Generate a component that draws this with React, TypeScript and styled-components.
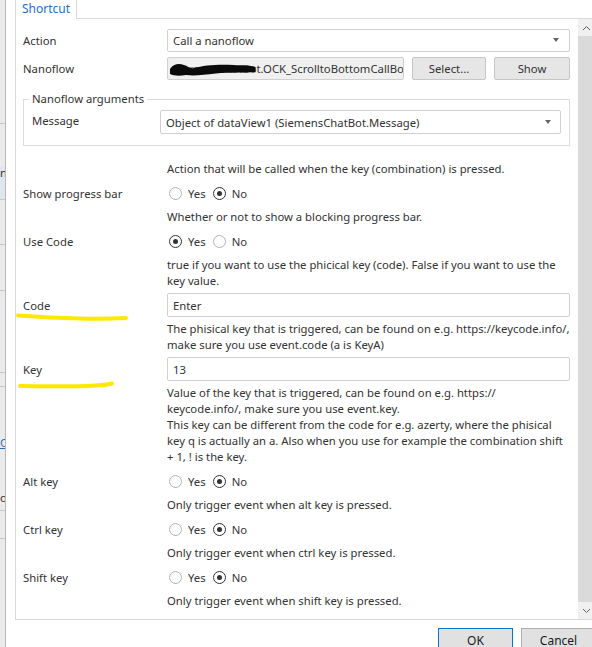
import React from "react";
import styled, { createGlobalStyle } from "styled-components";

const GlobalStyle = createGlobalStyle`
  html, body { margin: 0; padding: 0; background: #ffffff; }
  body {
    font-family: "Noto Sans", "Segoe UI", sans-serif;
    font-size: 11.3px;
    color: #333333;
  }
  * { box-sizing: border-box; }
`;

const Screen = styled.div`
  position: relative;
  width: 592px;
  height: 647px;
  overflow: hidden;
  display: flex;
  background: #ffffff;
`;

/* Sliver of the window that sits behind the dialog */
const Backdrop = styled.div`
  flex: 0 0 6px;
  display: flex;
  flex-direction: column;
  background: #ebebeb;
  border-right: 1px solid #b9b9b9;
  overflow: hidden;
`;

const BackdropPiece = styled.div<{ $h: number; $line?: boolean; $tint?: string }>`
  flex: 0 0 ${(p) => p.$h}px;
  background: ${(p) => p.$tint ?? "transparent"};
  border-bottom: ${(p) => (p.$line ? "1px solid #c8c8c8" : "none")};
  line-height: ${(p) => p.$h}px;
  white-space: nowrap;
  color: #333;
`;

const BackLink = styled.span`
  color: #2a6ebb;
  text-decoration: underline;
`;

const Dialog = styled.div`
  flex: 0 0 599px;
  width: 599px;
  min-width: 0;
  display: flex;
  flex-direction: column;
  padding: 0 9px;
`;

const TabStrip = styled.div`
  flex: 0 0 19px;
  display: flex;
`;

const Tab = styled.div`
  height: 19px;
  padding: 0 6px;
  border-left: 1px solid #d9d9d9;
  border-right: 1px solid #d9d9d9;
  color: #1c6fd6;
  font-size: 12px;
  line-height: 17px;
  background: #ffffff;
`;

const TabRule = styled.div`
  flex: 1;
  border-bottom: 1px solid #d9d9d9;
`;

const Panel = styled.div`
  flex: 0 0 601px;
  min-width: 0;
  display: flex;
  border: 1px solid #d9d9d9;
  border-top: none;
  overflow: hidden;
`;

const Scroller = styled.div`
  flex: 1;
  min-width: 0;
  height: 600px;
  padding: 9px 8px 0 7px;
  overflow: hidden;
`;

const Form = styled.div`
  display: grid;
  grid-template-columns: 144px minmax(0, 1fr);
  align-items: center;
`;

const Label = styled.div<{ $top?: number }>`
  grid-column: 1;
  height: 24px;
  margin-top: ${(p) => p.$top ?? 0}px;
  display: flex;
  align-items: center;
  white-space: nowrap;
`;

const Field = styled.div<{ $top?: number }>`
  grid-column: 2;
  min-height: 24px;
  margin-top: ${(p) => p.$top ?? 0}px;
  display: flex;
  align-items: center;
  gap: 8px;
  min-width: 0;
`;

const Hint = styled.div<{ $top?: number }>`
  grid-column: 2;
  margin: ${(p) => p.$top ?? 4}px 0 4px;
  line-height: 16px;
`;

const HintLine = styled.div`
  white-space: nowrap;
`;

const SelectBox = styled.div<{ $h?: number; $pad?: number }>`
  flex: 1;
  min-width: 0;
  height: ${(p) => p.$h ?? 23}px;
  display: flex;
  align-items: center;
  justify-content: space-between;
  padding: 0 ${(p) => p.$pad ?? 10}px 0 5px;
  border: 1px solid #d0d0d0;
  border-radius: 2px;
  background: #ffffff;
  white-space: nowrap;
  overflow: hidden;
`;

const Caret = styled.span`
  flex: 0 0 auto;
  width: 0;
  height: 0;
  border-left: 3px solid transparent;
  border-right: 3px solid transparent;
  border-top: 4px solid #666666;
`;

const TextBox = styled.div<{ $disabled?: boolean; $width?: number }>`
  flex: ${(p) => (p.$width ? `0 0 ${p.$width}px` : "1")};
  min-width: 0;
  height: ${(p) => (p.$disabled ? 23 : 24)}px;
  display: flex;
  align-items: center;
  padding: 0 5px;
  border: 1px solid #d0d0d0;
  border-radius: 2px;
  background: ${(p) => (p.$disabled ? "#f0f0f0" : "#ffffff")};
  white-space: nowrap;
  overflow: hidden;
  color: #333;
`;

const Redacted = styled.span`
  position: relative;
  color: #7a7a7a;
`;

const Scribble = styled.svg`
  position: absolute;
  left: -3px;
  top: 3px;
  width: calc(100% + 2px);
  height: 12px;
  overflow: visible;
`;

const PlainButton = styled.div<{ $width: number }>`
  flex: 0 0 ${(p) => p.$width}px;
  height: 23px;
  display: flex;
  align-items: center;
  justify-content: center;
  background: #e6e6e6;
  border: 1px solid #c6c6c6;
  border-radius: 2px;
  color: #333;
`;

const GroupBox = styled.fieldset`
  grid-column: 1 / -1;
  margin: 11px 0 0;
  padding: 0 8px 11px;
  min-width: 0;
  border: 1px solid #dcdcdc;
  display: grid;
  grid-template-columns: 128px minmax(0, 1fr);
  align-items: center;
`;

const Legend = styled.legend`
  margin-left: -3px;
  padding: 0 3px;
  line-height: 16px;
`;

const GroupLabel = styled.div`
  height: 24px;
  margin-top: 3px;
  display: flex;
  align-items: center;
  padding-bottom: 3px;
`;

const GroupField = styled.div`
  margin-top: 3px;
  display: flex;
  min-width: 0;
`;

const RadioGroup = styled.div`
  display: flex;
  align-items: center;
  gap: 7px;
  padding-left: 2px;
`;

const RadioOption = styled.span`
  display: flex;
  align-items: center;
  gap: 6px;
`;

const RadioDot = styled.span<{ $checked: boolean }>`
  width: 13px;
  height: 13px;
  border-radius: 50%;
  border: 1px solid ${(p) => (p.$checked ? "#333333" : "#b3b3b3")};
  background: #ffffff;
  display: flex;
  align-items: center;
  justify-content: center;
  &::after {
    content: "";
    display: ${(p) => (p.$checked ? "block" : "none")};
    width: 5px;
    height: 5px;
    border-radius: 50%;
    background: #333333;
  }
`;

const ScrollBar = styled.div`
  flex: 0 0 17px;
  display: flex;
  flex-direction: column;
  background: #f0f0f0;
`;

const ScrollArrow = styled.div`
  flex: 0 0 17px;
  display: flex;
  align-items: center;
  justify-content: center;
`;

const ScrollThumb = styled.div`
  flex: 1;
  background: #dadada;
`;

const Footer = styled.div`
  flex: 1;
  display: flex;
  justify-content: flex-end;
  gap: 8px;
  padding-top: 8px;
`;

const DialogButton = styled.div<{ $primary?: boolean }>`
  flex: 0 0 75px;
  height: 24px;
  display: flex;
  align-items: center;
  justify-content: center;
  background: #e1e1e1;
  border: 1px solid ${(p) => (p.$primary ? "#0078d7" : "#adadad")};
  color: #1a1a1a;
  font-size: 12px;
`;

const Marker = styled.svg`
  position: absolute;
  left: 0;
  top: 0;
  width: 592px;
  height: 647px;
  pointer-events: none;
`;

type Choice = "Yes" | "No";

function YesNo({ value }: { value: Choice }) {
  return (
    <RadioGroup>
      {(["Yes", "No"] as Choice[]).map((c) => (
        <RadioOption key={c}>
          <RadioDot $checked={value === c} />
          {c}
        </RadioOption>
      ))}
    </RadioGroup>
  );
}

function Chevron({ up }: { up?: boolean }) {
  return (
    <svg width="9" height="6" viewBox="0 0 9 6">
      <path
        d={up ? "M1 5 L4.5 1.5 L8 5" : "M1 1 L4.5 4.5 L8 1"}
        fill="none"
        stroke="#606060"
        strokeWidth="1"
      />
    </svg>
  );
}

const backdrop: { h: number; line?: boolean; tint?: string; text?: React.ReactNode }[] = [
  { h: 124, line: true },
  { h: 42 },
  { h: 14, text: "n", tint: "#dfe6ee" },
  { h: 20, tint: "#dfe6ee", line: true },
  { h: 45, line: true },
  { h: 46, line: true },
  { h: 82, line: true },
  { h: 14, line: true },
  { h: 48 },
  { h: 16, text: <BackLink>Cl</BackLink> },
  { h: 40 },
  { h: 14, text: "o" },
  { h: 6, line: true },
  { h: 28, line: true },
  { h: 114, line: true },
];

export default function App() {
  return (
    <>
      <GlobalStyle />
      <Screen>
        <Backdrop>
          {backdrop.map((b, i) => (
            <BackdropPiece key={i} $h={b.h} $line={b.line} $tint={b.tint}>
              {b.text}
            </BackdropPiece>
          ))}
        </Backdrop>

        <Dialog>
          <TabStrip>
            <Tab>Shortcut</Tab>
            <TabRule />
          </TabStrip>

          <Panel>
            <Scroller>
              <Form>
                <Label>Action</Label>
                <Field>
                  <SelectBox>
                    Call a nanoflow
                    <Caret />
                  </SelectBox>
                </Field>

                <Label $top={4}>Nanoflow</Label>
                <Field $top={4}>
                  <TextBox $disabled $width={237}>
                    <Redacted>
                      SiemensChatBo
                      <Scribble viewBox="0 0 86 12" preserveAspectRatio="none">
                        <path
                          d="M0 5 C3 0 9 -1 14 1 C18 2 20 5 24 4 C34 1 50 0 64 1 C72 1.5 80 1 86 3 L86 8 C74 9 60 8 46 9.5 C34 11 24 12 16 11 C10 12 4 12 0 10 Z"
                          fill="#0a0a0a"
                        />
                      </Scribble>
                    </Redacted>
                    t.OCK_ScrolltoBottomCallBot
                  </TextBox>
                  <PlainButton $width={74}>Select...</PlainButton>
                  <PlainButton $width={76}>Show</PlainButton>
                </Field>

                <GroupBox>
                  <Legend>Nanoflow arguments</Legend>
                  <GroupLabel>Message</GroupLabel>
                  <GroupField>
                    <SelectBox $h={24} $pad={9}>
                      Object of dataView1 (SiemensChatBot.Message)
                      <Caret />
                    </SelectBox>
                  </GroupField>
                </GroupBox>

                <Hint $top={15}>
                  <HintLine>Action that will be called when the key (combination) is pressed.</HintLine>
                </Hint>

                <Label>Show progress bar</Label>
                <Field>
                  <YesNo value="No" />
                </Field>
                <Hint>
                  <HintLine>Whether or not to show a blocking progress bar.</HintLine>
                </Hint>

                <Label>Use Code</Label>
                <Field>
                  <YesNo value="Yes" />
                </Field>
                <Hint>
                  <HintLine>
                    true if you want to use the phicical key (code). False if you want to use the
                  </HintLine>
                  <HintLine>key value.</HintLine>
                </Hint>

                <Label>Code</Label>
                <Field>
                  <TextBox>Enter</TextBox>
                </Field>
                <Hint>
                  <HintLine>
                    The phisical key that is triggered, can be found on e.g. https://keycode.info/,
                  </HintLine>
                  <HintLine>make sure you use event.code (a is KeyA)</HintLine>
                </Hint>

                <Label>Key</Label>
                <Field>
                  <TextBox>13</TextBox>
                </Field>
                <Hint>
                  <HintLine>Value of the key that is triggered, can be found on e.g. https://</HintLine>
                  <HintLine>keycode.info/, make sure you use event.key.</HintLine>
                  <HintLine>
                    This key can be different from the code for e.g. azerty, where the phisical
                  </HintLine>
                  <HintLine>
                    key q is actually an a. Also when you use for example the combination shift
                  </HintLine>
                  <HintLine>+ 1, ! is the key.</HintLine>
                </Hint>

                <Label>Alt key</Label>
                <Field>
                  <YesNo value="No" />
                </Field>
                <Hint>
                  <HintLine>Only trigger event when alt key is pressed.</HintLine>
                </Hint>

                <Label>Ctrl key</Label>
                <Field>
                  <YesNo value="No" />
                </Field>
                <Hint>
                  <HintLine>Only trigger event when ctrl key is pressed.</HintLine>
                </Hint>

                <Label>Shift key</Label>
                <Field>
                  <YesNo value="No" />
                </Field>
                <Hint>
                  <HintLine>Only trigger event when shift key is pressed.</HintLine>
                </Hint>
              </Form>
            </Scroller>

            <ScrollBar>
              <ScrollArrow>
                <Chevron up />
              </ScrollArrow>
              <ScrollThumb />
              <ScrollArrow>
                <Chevron />
              </ScrollArrow>
            </ScrollBar>
          </Panel>

          <Footer>
            <DialogButton $primary>OK</DialogButton>
            <DialogButton>Cancel</DialogButton>
          </Footer>
        </Dialog>

        {/* highlighter strokes under two of the labels */}
        <Marker viewBox="0 0 592 647">
          <path
            d="M18 315.5 C40 317 60 318 80 318.5 C100 319 115 318.5 126 318"
            fill="none"
            stroke="#fde800"
            strokeWidth="4"
            strokeLinecap="round"
          />
          <path
            d="M20 386 C45 386.5 75 386.5 96 385.5 C104 385 109 384.5 112 383.5"
            fill="none"
            stroke="#fde800"
            strokeWidth="4"
            strokeLinecap="round"
          />
        </Marker>
      </Screen>
    </>
  );
}
